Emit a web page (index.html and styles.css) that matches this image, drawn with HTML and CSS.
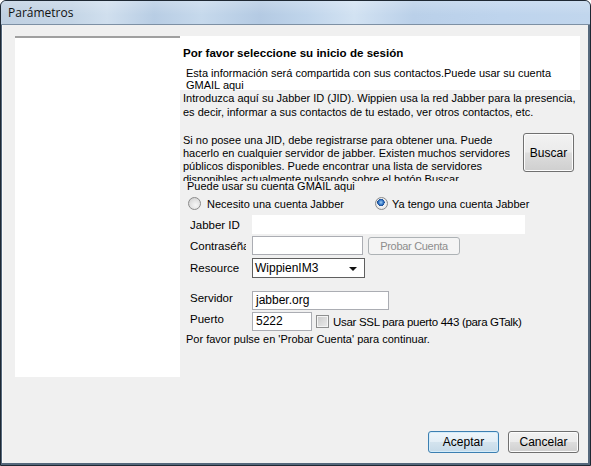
FILE: index.html
```html
<!DOCTYPE html>
<html lang="es">
<head>
  <meta charset="UTF-8">
  <title>Parámetros</title>
  <link rel="stylesheet" href="styles.css">
</head>
<body>
  <div class="window">
    <div class="titlebar">Parámetros</div>
    <div class="client">
      <div class="main">
        <div class="sidebar"></div>

        <div class="pane">
          <div class="intro">
            <h1>Por favor seleccione su inicio de sesión</h1>
            <p>Esta información será compartida con sus contactos.Puede usar su cuenta<br>GMAIL aqui</p>
          </div>

          <p class="jid-info">Introduzca aquí su Jabber ID (JID). Wippien usa la red Jabber para la presencia,<br>es decir, informar a sus contactos de tu estado, ver otros contactos, etc.</p>

          <div class="register">
            <p class="register-text">Si no posee una JID, debe registrarse para obtener una. Puede<br>hacerlo en cualquier servidor de jabber. Existen muchos servidores<br>públicos disponibles. Puede encontrar una lista de servidores<br>disponibles actualmente pulsando sobre el botón Buscar.</p>
            <button class="btn buscar">Buscar</button>
          </div>

          <p class="gmail">Puede usar su cuenta GMAIL aqui</p>

          <div class="radios">
            <label class="radio"><span class="radio-dot"></span>Necesito una cuenta Jabber</label>
            <label class="radio radio-right"><span class="radio-dot checked"></span>Ya tengo una cuenta Jabber</label>
          </div>

          <div class="form">
            <div class="row row-jid">
              <span class="label">Jabber ID</span>
              <span class="field field-jid"></span>
            </div>
            <div class="row row-pass">
              <span class="label">Contraséña</span>
              <span class="field field-pass"></span>
              <button class="btn disabled probar">Probar Cuenta</button>
            </div>
            <div class="row row-resource">
              <span class="label">Resource</span>
              <span class="select">WippienIM3<span class="arrow"></span></span>
            </div>
            <div class="row row-server">
              <span class="label label-high">Servidor</span>
              <span class="field field-server">jabber.org</span>
            </div>
            <div class="row row-port">
              <span class="label label-high">Puerto</span>
              <span class="field field-port">5222</span>
              <span class="check"></span>
              <span class="check-text">Usar SSL para puerto 443 (para GTalk)</span>
            </div>
          </div>

          <p class="hint">Por favor pulse en 'Probar Cuenta' para continuar.</p>
        </div>
      </div>

      <div class="footer">
        <button class="btn default">Aceptar</button>
        <button class="btn">Cancelar</button>
      </div>
    </div>
  </div>
</body>
</html>
```

FILE: styles.css
```css
:root {
  --dialogo: #f0f0f0;
  --borde-campo: #abadb3;
  --texto: #000;
}
body {
  margin: 0;
  background: #fff;
  font-family: 'Liberation Sans', Arial, sans-serif;
  font-size: 11px;
  color: var(--texto);
}
p, h1 {
  margin: 0;
}
.window {
  width: 591px;
  height: 466px;
  box-sizing: border-box;
  display: flex;
  flex-direction: column;
  background: #55687c;
  border: 1px solid #1e2833;
  border-radius: 6px 6px 0 0;
  overflow: hidden;
}
.titlebar {
  height: 23px;
  line-height: 23px;
  padding-left: 7px;
  font-family: 'Open Sans', 'Noto Sans', sans-serif;
  font-size: 12px;
  color: #111;
  border-bottom: 1px solid #7d90a4;
  background:
    linear-gradient(180deg, rgba(255,255,255,0.2), rgba(255,255,255,0) 60%),
    linear-gradient(90deg, #c0d0e1 0%, #c4d5e6 12%, #d0dfee 18%, #b8cde4 26%, #c6d9ec 34%, #b4cae3 44%, #c0d5eb 52%, #d2e2f2 60%, #bad0e9 70%, #bed4ed 85%, #c1d6ed 100%);
}
.client {
  flex: 1;
  display: flex;
  flex-direction: column;
  margin: 0 2px 2px 1px;
  background: var(--dialogo);
  border-left: 1px solid #fafafa;
}
.main {
  display: flex;
  padding: 11px 0 0 12px;
}
.sidebar {
  width: 165px;
  height: 339px;
  background: #fff;
  border-top: 2px solid #a0a0a0;
}
.pane {
  width: 400px;
  display: flex;
  flex-direction: column;
}
.intro {
  box-sizing: border-box;
  height: 54px;
  padding-top: 10px;
  background: #fff;
}
.intro h1 {
  font-size: 11.6px;
  font-weight: bold;
  line-height: 13px;
  padding-left: 3px;
}
.intro p {
  margin-top: 8px;
  padding-left: 6px;
  line-height: 12px;
}
.jid-info {
  margin-top: 1px;
  padding-left: 3px;
  line-height: 14px;
  white-space: nowrap;
}
.register {
  display: flex;
  align-items: flex-start;
  margin-top: 15px;
}
/* the last line is cut by the box height, as in the dialog */
.register-text {
  height: 47px;
  overflow: hidden;
  padding-left: 3px;
  line-height: 13px;
  white-space: nowrap;
}
.buscar {
  margin-left: auto;
  margin-right: 6px;
  margin-top: -1px;
  width: 51px;
  height: 39px;
  font-size: 11.5px;
}
.gmail {
  margin-top: -1px;
  padding-left: 7px;
  line-height: 13px;
}
.radios {
  display: flex;
  align-items: center;
  height: 15px;
  margin-top: 3px;
  padding-left: 8px;
}
.radio {
  display: flex;
  align-items: center;
  gap: 6px;
}
.radio-right {
  margin-left: 31px;
  gap: 4px;
}
.radio-dot {
  width: 11px;
  height: 11px;
  border-radius: 50%;
  border: 1px solid #8a8a8a;
  background: radial-gradient(circle at 60% 65%, #f6f6f6 0%, #e0e0e0 55%, #c9c9c9 100%);
}
.radio-dot.checked {
  background:
    radial-gradient(circle at 45% 40%, #9fd0f5 0%, #2f6fc0 28%, #1b4c8f 40%, transparent 42%),
    radial-gradient(circle, #ffffff 0%, #e8e8e8 70%, #cfcfcf 100%);
}
.form {
  display: flex;
  flex-direction: column;
  padding-left: 10px;
}
.row {
  display: flex;
  align-items: center;
  height: 19px;
}
.row-jid { margin-top: 4px; }
.row-pass { margin-top: 2px; }
.row-resource { margin-top: 3px; height: 20px; }
.row-server { margin-top: 13px; }
.row-port { margin-top: 2px; }
.label {
  width: 56px;
  margin-right: 6px;
  overflow: hidden;
  white-space: nowrap;
  font-size: 11.5px;
  line-height: 14px;
}
.label-high {
  align-self: flex-start;
}
.field {
  box-sizing: border-box;
  height: 19px;
  line-height: 17px;
  padding-left: 3px;
  background: #fff;
  border: 1px solid var(--borde-campo);
  font-size: 12px;
}
.field-jid {
  width: 273px;
  border-color: #fff;
}
.field-pass { width: 111px; }
.field-server { width: 137px; }
.field-port { width: 60px; }
.select {
  box-sizing: border-box;
  position: relative;
  width: 113px;
  height: 20px;
  line-height: 18px;
  padding-left: 2px;
  background: #fff;
  border: 1px solid #5f5f5f;
  font-size: 12px;
}
.arrow {
  position: absolute;
  right: 7px;
  top: 8px;
  border-left: 4px solid transparent;
  border-right: 4px solid transparent;
  border-top: 4px solid #111;
}
.check {
  box-sizing: border-box;
  width: 13px;
  height: 13px;
  margin-left: 4px;
  border: 1px solid #8e8f8f;
  box-shadow: inset 0 0 0 1px #f4f4f4;
  background: linear-gradient(135deg, #c9c9c9 0%, #dedede 60%, #ececec 100%);
}
.check-text {
  margin-left: 4px;
  font-size: 11.5px;
  letter-spacing: -0.3px;
}
.hint {
  margin-top: 2px;
  padding-left: 6px;
  line-height: 13px;
}
.btn {
  box-sizing: border-box;
  font-family: 'Liberation Sans', Arial, sans-serif;
  font-size: 12px;
  color: #000;
  padding: 0;
  border: 1px solid #707070;
  border-radius: 3px;
  box-shadow: inset 0 0 0 1px #fcfcfc;
  background: linear-gradient(180deg, #f2f2f2 0%, #ebebeb 48%, #dddddd 52%, #cfcfcf 100%);
}
.btn.disabled {
  color: #8d8d8d;
  border-color: #adb2b5;
  background: #f4f4f4;
  box-shadow: none;
}
.probar {
  width: 92px;
  height: 18px;
  margin-left: 5px;
  font-size: 11px;
  letter-spacing: -0.3px;
}
.footer {
  display: flex;
  justify-content: flex-end;
  gap: 9px;
  margin-top: auto;
  padding: 0 9px 10px 0;
}
.footer .btn {
  width: 71px;
  height: 22px;
}
.btn.default {
  border-color: #3c7fb1;
  box-shadow: inset 0 0 0 1px #d4ecfa;
  background: linear-gradient(180deg, #eef6fb 0%, #e3eef6 48%, #d3e3ee 52%, #c6dae8 100%);
}
```
